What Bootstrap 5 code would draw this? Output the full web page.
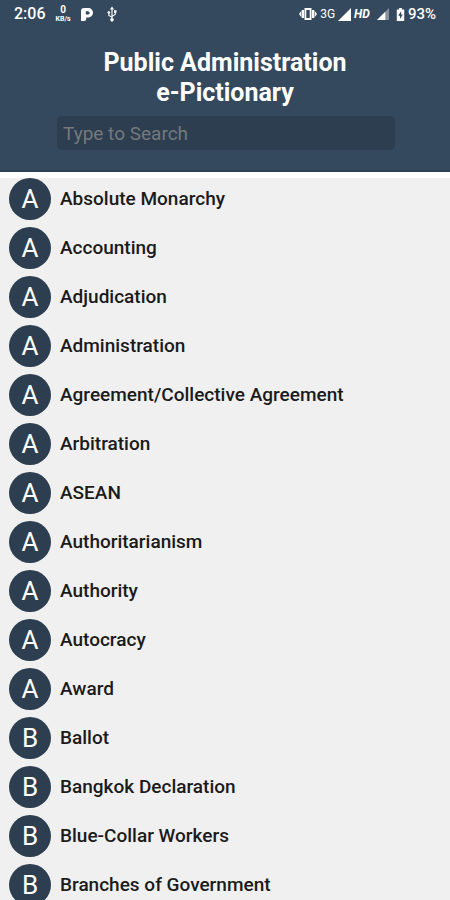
<!DOCTYPE html>
<html lang="en">
<head>
<meta charset="utf-8">
<meta name="viewport" content="width=device-width, initial-scale=1">
<title>Public Administration e-Pictionary</title>
<link href="https://cdn.jsdelivr.net/npm/bootstrap@5.3.0/dist/css/bootstrap.min.css" rel="stylesheet">
<style>
  body { font-family: Roboto, "Liberation Sans", sans-serif; background: #f0f0f0; }
  .app-header { background: #34495e; border-bottom: 2px solid #2b3e50; }
  .status-bar { height: 28px; padding: 0 14px; font-size: 16px; line-height: 28px; font-weight: 500; }
  .status-bar svg { fill: #fff; flex: none; }
  .status-left { gap: 10px; }
  .status-right { gap: 3px; }
  .status-pct { font-size: 15px; }
  .rate { font-size: 10px; line-height: 10px; font-weight: 700; }
  .rate-unit { font-size: 7px; line-height: 8px; }
  .net { font-size: 12px; font-weight: 400; }
  .app-title { font-size: 25px; line-height: 30px; font-weight: 700; padding-top: 20px; }
  .search-wrap { padding: 8px 55px 20px 57px; }
  .search-box, .search-box:focus { height: 34px; padding: 0 6px; font-size: 19px; line-height: 28px; color: #fff; background: #2c3e50; border-radius: 5px; }
  .search-box::placeholder { color: #75797d; opacity: 1; }
  .term-list { border-top: 6px solid #fff; scrollbar-width: none; }
  .term { height: 49px; padding: 0 9px 7px; gap: 9px; font-size: 19px; font-weight: 500; color: #1b1b1b; }
  .term-letter { width: 42px; height: 42px; background: #2c3e50; font-size: 26px; font-weight: 400; }
</style>
</head>
<body>
<div class="d-flex flex-column vh-100 overflow-hidden">
  <header class="app-header text-white">
    <div class="status-bar d-flex justify-content-between align-items-center">
      <div class="status-left d-flex align-items-center">
        <span>2:06</span>
        <span class="d-flex flex-column align-items-center"><span class="rate">0</span><span class="rate rate-unit">KB/s</span></span>
        <svg width="12" height="13" viewBox="0 0 12 13" aria-hidden="true"><path fill-rule="evenodd" d="M3 0h4.500a4.500 4.700 0 0 1 0 9.400H5.200V11A2 2 0 0 1 3.200 13H0V3A3 3 0 0 1 3 0zM4.800 3.300v3.200H7A1.600 1.600 0 0 0 7 3.300z"/></svg>
        <svg class="ms-1" width="10" height="16" viewBox="0 0 12 18" aria-hidden="true"><path d="M6 0l2.500 3.500H6.700v7.200L9.300 9V7.500h-.9v-3h3v3h-.8v2.200l-3.900 2.600v1.800a2 2 0 1 1-1.400 0v-.8L1.600 11V8.600a1.600 1.600 0 1 1 1.300 0v1.700l2.400 1.600V3.500H3.500z"/></svg>
      </div>
      <div class="status-right d-flex align-items-center">
        <svg width="18" height="12" viewBox="0 0 18 12" aria-hidden="true"><path fill-rule="evenodd" d="M5.500 0h7v12h-7zM7.300 2v8h3.400V2z"/><path d="M2.700 2H5v8H2.700zM0 6l2.200-3v6zM13 2h2.300v8H13zM18 6l-2.200-3v6z"/></svg>
        <span class="net">3G</span>
        <svg width="13" height="13" viewBox="0 0 13 13" aria-hidden="true"><path d="M13 0v13H0z"/></svg>
        <span class="net fst-italic fw-bold">HD</span>
        <svg class="ms-1" width="12" height="12" viewBox="0 0 13 13" aria-hidden="true"><path opacity=".4" d="M13 0v13H0z"/><path d="M9 4v9H0z"/></svg>
        <svg class="ms-1" width="9" height="13" viewBox="0 0 9 14" aria-hidden="true"><path fill-rule="evenodd" d="M3 0h3v1.500h2.500V14H.5V1.500H3zM5.200 3.500L2 8.300h2v3.500L7 7H5.200z"/></svg>
        <span class="status-pct">93%</span>
      </div>
    </div>
    <h1 class="app-title text-center mb-0">Public Administration<br>e-Pictionary</h1>
    <form class="search-wrap" role="search">
      <input type="text" class="search-box form-control border-0 shadow-none" placeholder="Type to Search" aria-label="Type to Search">
    </form>
  </header>
  <main class="term-list flex-fill overflow-auto">
    <ul class="list-unstyled mb-0">
      <li class="term d-flex align-items-center"><span class="term-letter d-flex align-items-center justify-content-center rounded-circle text-white">A</span><span>Absolute Monarchy</span></li>
      <li class="term d-flex align-items-center"><span class="term-letter d-flex align-items-center justify-content-center rounded-circle text-white">A</span><span>Accounting</span></li>
      <li class="term d-flex align-items-center"><span class="term-letter d-flex align-items-center justify-content-center rounded-circle text-white">A</span><span>Adjudication</span></li>
      <li class="term d-flex align-items-center"><span class="term-letter d-flex align-items-center justify-content-center rounded-circle text-white">A</span><span>Administration</span></li>
      <li class="term d-flex align-items-center"><span class="term-letter d-flex align-items-center justify-content-center rounded-circle text-white">A</span><span>Agreement/Collective Agreement</span></li>
      <li class="term d-flex align-items-center"><span class="term-letter d-flex align-items-center justify-content-center rounded-circle text-white">A</span><span>Arbitration</span></li>
      <li class="term d-flex align-items-center"><span class="term-letter d-flex align-items-center justify-content-center rounded-circle text-white">A</span><span>ASEAN</span></li>
      <li class="term d-flex align-items-center"><span class="term-letter d-flex align-items-center justify-content-center rounded-circle text-white">A</span><span>Authoritarianism</span></li>
      <li class="term d-flex align-items-center"><span class="term-letter d-flex align-items-center justify-content-center rounded-circle text-white">A</span><span>Authority</span></li>
      <li class="term d-flex align-items-center"><span class="term-letter d-flex align-items-center justify-content-center rounded-circle text-white">A</span><span>Autocracy</span></li>
      <li class="term d-flex align-items-center"><span class="term-letter d-flex align-items-center justify-content-center rounded-circle text-white">A</span><span>Award</span></li>
      <li class="term d-flex align-items-center"><span class="term-letter d-flex align-items-center justify-content-center rounded-circle text-white">B</span><span>Ballot</span></li>
      <li class="term d-flex align-items-center"><span class="term-letter d-flex align-items-center justify-content-center rounded-circle text-white">B</span><span>Bangkok Declaration</span></li>
      <li class="term d-flex align-items-center"><span class="term-letter d-flex align-items-center justify-content-center rounded-circle text-white">B</span><span>Blue-Collar Workers</span></li>
      <li class="term d-flex align-items-center"><span class="term-letter d-flex align-items-center justify-content-center rounded-circle text-white">B</span><span>Branches of Government</span></li>
    </ul>
  </main>
</div>
<script src="https://cdn.jsdelivr.net/npm/bootstrap@5.3.0/dist/js/bootstrap.bundle.min.js"></script>
</body>
</html>
